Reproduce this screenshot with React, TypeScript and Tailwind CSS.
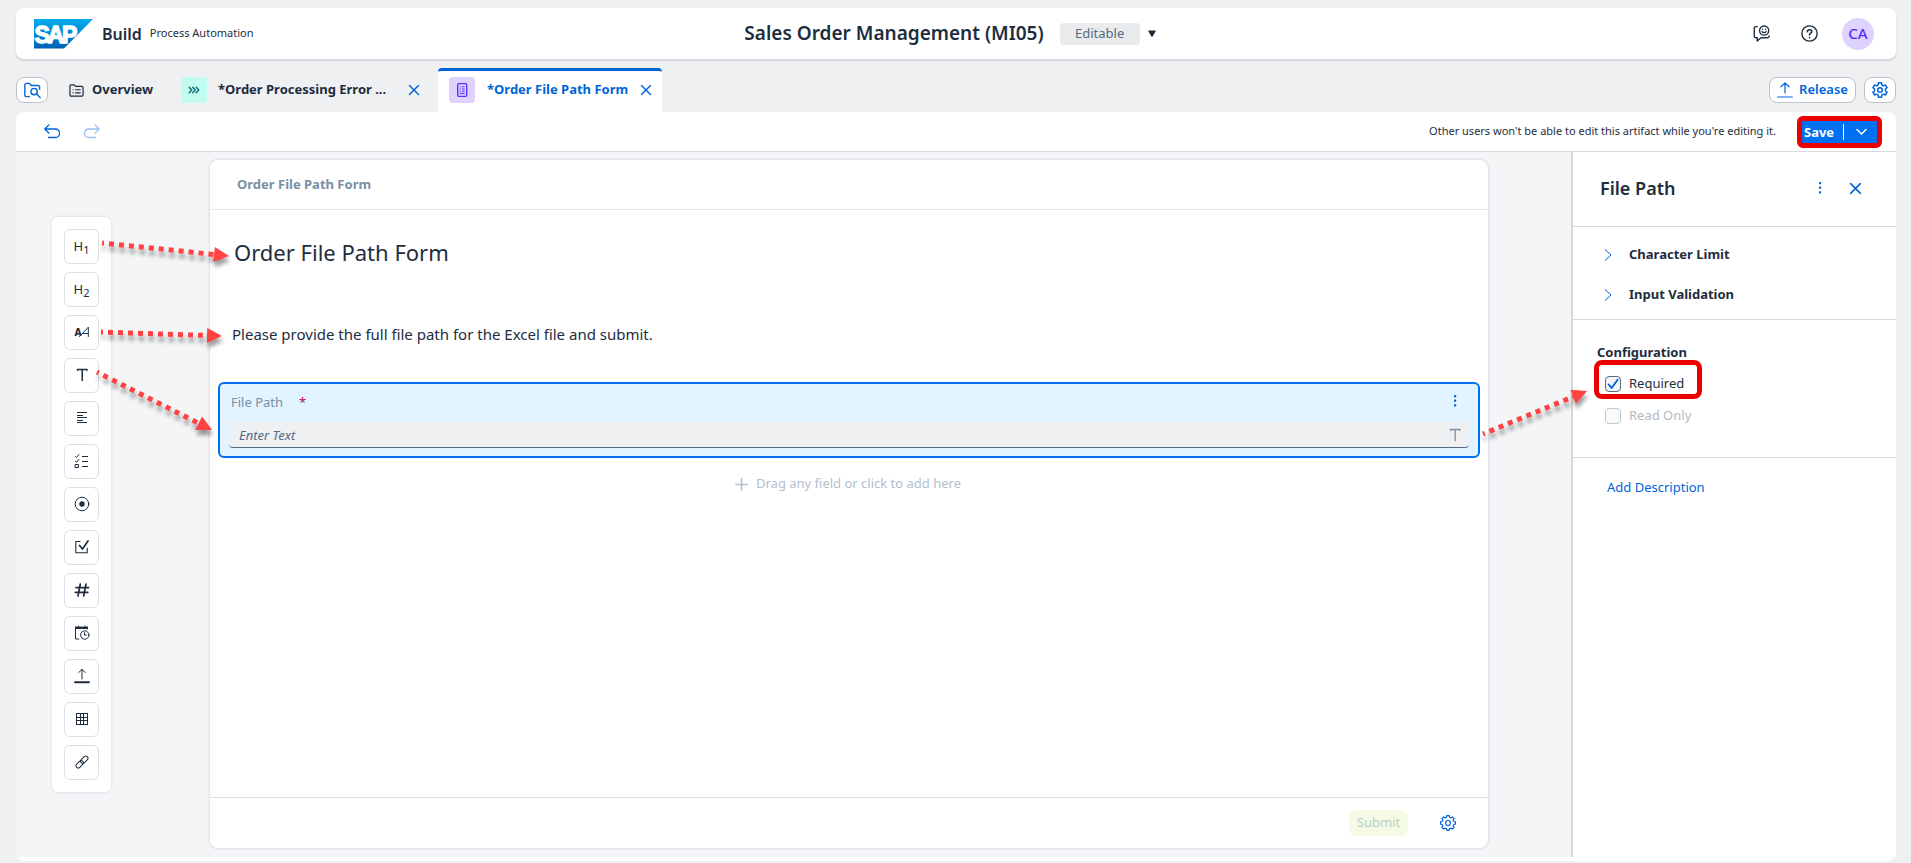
import React from "react";

type IconProps = { children: React.ReactNode; size?: number; className?: string };

function Icon({ children, size = 16, className = "" }: IconProps) {
  return (
    <svg
      width={size}
      height={size}
      viewBox="0 0 16 16"
      fill="none"
      stroke="currentColor"
      strokeWidth={1.3}
      strokeLinecap="round"
      strokeLinejoin="round"
      aria-hidden="true"
      className={"shrink-0 " + className}
    >
      {children}
    </svg>
  );
}

function CloseIcon({ size = 12 }: { size?: number }) {
  return (
    <Icon size={size}>
      <path d="M2 2 14 14M14 2 2 14" strokeWidth={1.9} />
    </Icon>
  );
}

function DotsIcon() {
  return (
    <Icon>
      <g fill="currentColor" stroke="none">
        <rect x="7" y="2" width="2.2" height="2.2" rx=".6" />
        <rect x="7" y="6.6" width="2.2" height="2.2" rx=".6" />
        <rect x="7" y="11.2" width="2.2" height="2.2" rx=".6" />
      </g>
    </Icon>
  );
}

function SapLogo() {
  return (
    <svg width="60" height="30" viewBox="0 0 60 30" role="img" aria-label="SAP">
      <defs>
        <linearGradient id="sap-blue" x1="0" y1="0" x2="0" y2="1">
          <stop offset="0" stopColor="#00aeef" />
          <stop offset="0.5" stopColor="#0086d2" />
          <stop offset="1" stopColor="#0060b4" />
        </linearGradient>
      </defs>
      <path d="M0 0h59L30 29.5H0z" fill="url(#sap-blue)" />
      <text
        y="23.500"
        fontFamily="Liberation Sans, sans-serif"
        fontWeight="700"
        fontSize="23"
        fill="#fff"
        stroke="#fff"
        strokeWidth="1.400"
      >
        <tspan x="0.500">S</tspan>
        <tspan x="13.500">A</tspan>
        <tspan x="28">P</tspan>
      </text>
    </svg>
  );
}

function Arrow({ x1, y1, x2, y2 }: { x1: number; y1: number; x2: number; y2: number }) {
  const length = Math.hypot(x2 - x1, y2 - y1);
  const angle = (Math.atan2(y2 - y1, x2 - x1) * 180) / Math.PI;
  return (
    <g transform={`translate(${x1} ${y1}) rotate(${angle})`}>
      <path d={`M0 0H${length - 14}`} stroke="#ff4343" strokeWidth="5" strokeDasharray="5 5" strokeDashoffset="3" />
      <path d={`M${length - 15} -7.5 ${length} 0 ${length - 15} 7.5z`} fill="#ff4343" />
    </g>
  );
}

/** Outline of a cog centred on 8,8 with the given number of teeth. */
function cogPath(teeth: number, outer: number, inner: number) {
  const step = (Math.PI * 2) / teeth;
  const points: string[] = [];
  for (let i = 0; i < teeth; i++) {
    const a = i * step - Math.PI / 2;
    const corners: [number, number][] = [
      [-0.32, inner],
      [-0.2, outer],
      [0.2, outer],
      [0.32, inner],
    ];
    for (const [offset, radius] of corners) {
      const t = a + offset * step;
      points.push(`${(8 + radius * Math.cos(t)).toFixed(2)} ${(8 + radius * Math.sin(t)).toFixed(2)}`);
    }
  }
  return `M${points.join("L")}z`;
}

const tools: { name: string; icon: React.ReactNode }[] = [
  {
    name: "Heading 1",
    icon: (
      <span className="text-[13px] leading-4">
        H<sub className="text-[11px]">1</sub>
      </span>
    ),
  },
  {
    name: "Heading 2",
    icon: (
      <span className="text-[13px] leading-4">
        H<sub className="text-[11px]">2</sub>
      </span>
    ),
  },
  {
    name: "Paragraph",
    icon: (
      <Icon>
        <text x="0.500" y="12" fontSize="10" fontWeight="800" fill="currentColor" stroke="none">
          A
        </text>
        <path d="M5.500 12.500 14.300 3.200v9.300M9 9.500h5" strokeWidth="1" />
      </Icon>
    ),
  },
  {
    name: "Text",
    icon: (
      <Icon>
        <path d="M3.500 2.500h9.500M8.200 2.500v11M3.500 2.500v.8M13 2.500v.8" strokeWidth="1.500" />
      </Icon>
    ),
  },
  {
    name: "Text Area",
    icon: (
      <Icon>
        <path d="M3 2.500h10M3 5.500h6M3 7.500h10M3 10.500h6M3 12.500h10" strokeWidth="1" strokeLinecap="butt" />
      </Icon>
    ),
  },
  {
    name: "Choice",
    icon: (
      <Icon>
        <path d="M8 3.500h6M8 8.500h6M8 13.500h6" strokeWidth="1" strokeLinecap="butt" />
        <path d="m1.500 3.500 1 1 2.500-3M1.500 8.300l1 1L5 6.500" strokeWidth="1" />
        <rect x="1.500" y="11.500" width="3" height="3" strokeWidth="1" />
      </Icon>
    ),
  },
  {
    name: "Radio",
    icon: (
      <Icon>
        <circle cx="8" cy="8" r="6.800" strokeWidth="1" />
        <circle cx="8" cy="8" r="2.700" fill="currentColor" stroke="none" />
      </Icon>
    ),
  },
  {
    name: "Checkbox",
    icon: (
      <Icon>
        <path d="M6 2.500H1.800v11.200h11.400V9" strokeWidth="1.100" />
        <path d="m5.500 6.500 3 3.500L14 2" strokeWidth="1.700" />
      </Icon>
    ),
  },
  {
    name: "Number",
    icon: (
      <Icon>
        <path d="M6.300 2 4 14M12 2 9.700 14M2 5.700h12.500M1.300 10.300h12.500" strokeWidth="1.700" />
      </Icon>
    ),
  },
  {
    name: "Date",
    icon: (
      <Icon>
        <path d="M1 2.800h12.500" strokeWidth="2.400" strokeLinecap="butt" />
        <path d="M4.500 1v1M11 1v1M4.800 14H1.500V2M13.400 2v2" strokeWidth="1" />
        <circle cx="10.800" cy="10" r="4.200" strokeWidth="1" />
        <path d="M10.500 7.500V10h2" strokeWidth="1" />
      </Icon>
    ),
  },
  {
    name: "Upload",
    icon: (
      <Icon>
        <path d="M8 11V1.500M4.800 4.500 8 1.300l3.200 3.200" strokeWidth="1" />
        <path d="M1 14.200h14" strokeWidth="1.900" />
      </Icon>
    ),
  },
  {
    name: "Table",
    icon: (
      <Icon>
        <path
          d="M2 2.500h12M2 6.500h12M2 9.500h12M2 13.500h12M2.500 2v12M6.500 2v12M9.500 2v12M13.500 2v12"
          strokeWidth="1"
          strokeLinecap="butt"
        />
      </Icon>
    ),
  },
  {
    name: "Link",
    icon: (
      <Icon>
        <g transform="rotate(-45 8 8)" strokeWidth="1">
          <rect x="0.500" y="5.800" width="8.500" height="4.400" rx="2.200" />
          <rect x="7" y="5.800" width="8.500" height="4.400" rx="2.200" />
        </g>
      </Icon>
    ),
  },
];

function Header() {
  return (
    <header className="mr-[15px] ml-4 mt-2 grid h-[51px] shrink-0 grid-cols-[1fr_auto_1fr] items-center rounded-lg bg-white pr-[22px] pl-[18px] shadow-[0_2px_2px_#cfd4d8]">
      <div className="flex items-center">
        <SapLogo />
        <span className="ml-2 text-[16px] font-semibold">Build</span>
        <span className="ml-2 text-[11px]">Process Automation</span>
      </div>
      <div className="mr-2 flex items-center">
        <h1 className="text-[19px] font-semibold">Sales Order Management (MI05)</h1>
        <span className="ml-4 flex h-[22px] w-20 items-center justify-center rounded bg-[#eaebec] text-[13px] text-[#556b82]">
          Editable
        </span>
        <button type="button" aria-label="Change version" className="ml-2">
          <svg width="8" height="7" viewBox="0 0 8 7" aria-hidden="true">
            <path d="M0 .5h8L4.700 6.500H3.300z" fill="#1d2d3e" />
          </svg>
        </button>
      </div>
      <div className="flex items-center justify-end">
        <button type="button" aria-label="Feedback">
          <Icon size={17}>
            <path d="M4 1.500H2.700A1.500 1.500 0 0 0 1.200 3v7.500A1.500 1.500 0 0 0 2.700 12H4v3l3.500-3h6a1.600 1.600 0 0 0 1.700-1.600" />
            <circle cx="10.500" cy="5.200" r="4.300" />
            <path d="M8.600 6.200c.9 1.300 2.900 1.300 3.800 0M9 3.900v.2M12 3.900v.2" />
          </Icon>
        </button>
        <button type="button" aria-label="Help" className="ml-[31px]">
          <Icon size={17}>
            <circle cx="8" cy="8" r="7.200" />
            <path d="M6 6.300c0-2.500 4.100-2.500 4.100-.2C10.100 7.600 8 7.600 8 9.300M8 11.800v.2" strokeWidth="1.500" />
          </Icon>
        </button>
        <button
          type="button"
          className="ml-6 flex size-8 items-center justify-center rounded-full bg-[#ded3ff] text-[15px] font-medium text-[#552cff]"
        >
          CA
        </button>
      </div>
    </header>
  );
}

const boxButton = "flex h-[26px] items-center justify-center rounded-lg border border-[#bcc3ca] bg-white text-[#0064d9]";

function TabBar() {
  return (
    <nav className="mr-[15px] ml-4 mt-[9px] flex h-11 shrink-0 items-center">
      <button type="button" aria-label="Browse project" className={boxButton + " w-8"}>
        <Icon size={17}>
          <path d="M5 13.800H2.300A1.500 1.500 0 0 1 .8 12.300V2.800A1.500 1.500 0 0 1 2.300 1.300H5l1.800 2h6.400a1.500 1.500 0 0 1 1.500 1.500v2" />
          <circle cx="9.500" cy="9" r="3" />
          <path d="m11.800 11.300 3.400 3.200" />
        </Icon>
      </button>
      <a href="#overview" className="ml-[21px] flex items-center text-[13px] font-bold">
        <Icon size={15}>
          <path d="M1 3.300A1.300 1.300 0 0 1 2.300 2h3.200L7 3.600h6.500A1.500 1.500 0 0 1 15 5.100v7.400a1.500 1.500 0 0 1-1.500 1.500h-11A1.500 1.500 0 0 1 1 12.500z" />
          <path d="M4.300 7.200h.2M7 7.200h5M4.300 10.500h.2M7 10.500h5" />
        </Icon>
        <span className="ml-2 min-w-[62px]">Overview</span>
      </a>
      <div className="ml-[27px] flex items-center">
        <span className="flex size-[26px] items-center justify-center rounded bg-[#c2fcee] text-[#046c7a]">
          <Icon size={14}>
            <path d="m2.500 4.800 3 3.200-3 3.200M6.500 4.800l3 3.200-3 3.200M10.500 4.800l3 3.200-3 3.200" strokeWidth="1.600" />
          </Icon>
        </span>
        <a href="#order-processing" className="ml-[11px] min-w-[173px] text-[13px] font-bold">
          *Order Processing Error ...
        </a>
        <button type="button" aria-label="Close Order Processing Error" className="ml-[17px] text-[#0064d9]">
          <CloseIcon />
        </button>
      </div>
      <div className="ml-[18px] flex h-11 items-center rounded-t-sm border-t-3 border-[#0064d9] bg-white pr-2.5 pb-[3px] pl-[11px] text-[#0064d9]">
        <span className="flex size-[26px] items-center justify-center rounded bg-[#ded3ff] text-[#552cff]">
          <Icon>
            <rect x="3.700" y="1.700" width="9" height="12.600" rx="1" />
            <path d="M6 4.800h.4M8.300 4.800h2M6 7h.4M8.300 7h2M6 9.200h.4M8.300 9.200h2M6 11.400h4.300" strokeWidth="1" />
          </Icon>
        </span>
        <a href="#order-file-path" aria-current="page" className="ml-3 min-w-[143px] text-[13px] font-bold">
          *Order File Path Form
        </a>
        <button type="button" aria-label="Close Order File Path Form" className="ml-2.5">
          <CloseIcon />
        </button>
      </div>
      <div className="ml-auto flex gap-2">
        <button type="button" className={boxButton + " w-[87px] gap-1.5 text-[13px] font-semibold"}>
          <Icon>
            <path d="M8 11V1.200M4 4.800 8 .9l4 3.900M.6 15h14.800" strokeWidth="1.200" />
          </Icon>
          Release
        </button>
        <button type="button" aria-label="Settings" className={boxButton + " w-8"}>
          <Icon>
            <path d={cogPath(6, 7.400, 5.500)} strokeWidth="1.500" />
            <circle cx="8" cy="8" r="2.300" strokeWidth="1.500" />
          </Icon>
        </button>
      </div>
    </nav>
  );
}

function Toolbar() {
  return (
    <div className="flex h-10 shrink-0 items-center rounded-t-lg border-b border-[#d9d9d9] bg-white pr-3.5 pl-7">
      <button type="button" aria-label="Undo" className="text-[#0064d9]">
        <Icon>
          <path d="M4.800 1 .8 5l4 4M1 5h10.500a4 4 0 0 1 4 4.200c0 2.400-1.700 4.300-4 4.300H4.500" />
        </Icon>
      </button>
      <button type="button" aria-label="Redo" disabled className="ml-6 text-[#99c1f0]">
        <Icon>
          <path d="m11.200 1 4 4-4 4M15 5H4.500a4 4 0 0 0-4 4.200c0 2.400 1.700 4.300 4 4.300h7" />
        </Icon>
      </button>
      <p className="ml-auto text-[11px]">Other users won't be able to edit this artifact while you're editing it.</p>
      <div className="ml-[21px] flex h-8 w-[85px] items-center rounded-md border-5 border-[#eb0000] bg-[#0070f2] text-white">
        <button type="button" className="pl-0.5 text-[13px] leading-4 font-bold">
          Save
        </button>
        <button type="button" aria-label="More save options" className="ml-auto flex h-4 items-center border-l border-white pr-2.5 pl-3">
          <svg width="11" height="8" viewBox="0 0 11 8" fill="none" stroke="currentColor" strokeWidth="1.500" aria-hidden="true">
            <path d="m1 1.500 4.500 4.500L10 1.500" strokeLinecap="round" />
          </svg>
        </button>
      </div>
    </div>
  );
}

function Palette() {
  return (
    <div className="flex w-[59px] shrink-0 flex-col items-center gap-2 rounded-md bg-white py-3 shadow-[0_0_3px_#d0d5dc]">
      {tools.map((tool) => (
        <button
          key={tool.name}
          type="button"
          aria-label={tool.name}
          className="flex size-[35px] items-center justify-center rounded-md border border-[#dcdfe6]"
        >
          {tool.icon}
        </button>
      ))}
    </div>
  );
}

function FormCard() {
  return (
    <section className="flex min-w-0 flex-1 flex-col rounded-lg bg-white shadow-[0_0_3px_#bcc6d2]">
      <div className="flex h-[50px] items-center border-b border-[#e8e9eb] px-[27px] text-[13px] font-bold text-[#788fa6]">
        Order File Path Form
      </div>
      <div className="flex flex-1 flex-col px-2">
        <h2 className="mt-[26px] ml-4 text-[22px] leading-8">Order File Path Form</h2>
        <p className="mt-[54px] ml-3.5 text-[15px] leading-6">
          Please provide the full file path for the Excel file and submit.
        </p>
        <div className="mt-9 flex h-[76px] flex-col rounded-md border-2 border-[#0070f2] bg-[#e1f4ff] px-[9px] pb-2">
          <div className="flex flex-1 items-center pl-0.5 text-[13px]">
            <label htmlFor="file-path" className="text-[#788fa6]">
              File Path
            </label>
            <span className="ml-4 text-[#ba066c]">*</span>
            <button type="button" aria-label="Field actions" className="mr-1.5 ml-auto pb-1 text-[#0064d9]">
              <DotsIcon />
            </button>
          </div>
          <div className="flex h-[26px] items-center rounded-sm border-b border-[#556b82] bg-[#eff0f2] pr-1.5 pl-2.5">
            <input
              id="file-path"
              type="text"
              placeholder="Enter Text"
              className="h-6 min-w-0 flex-1 bg-transparent text-[13px] outline-none placeholder:text-[#556b82] placeholder:italic"
            />
            <Icon className="text-[#788fa6]">
              <path d="M3.500 2.500h9.500M8.200 2.500v11M3.500 2.500v.8M13 2.500v.8" strokeWidth="1.300" />
            </Icon>
          </div>
        </div>
        <button type="button" className="mt-4 flex h-5 items-center justify-center gap-2 text-[13px] text-[#b3c0ce]">
          <Icon size={13}>
            <path d="M8 1v14M1 8h14" strokeWidth="2" />
          </Icon>
          <span className="min-w-[207px] text-left">Drag any field or click to add here</span>
        </button>
      </div>
      <div className="flex h-[51px] items-center justify-end border-t border-[#d9dde2] pr-8">
        <button type="button" disabled className="h-[26px] w-[59px] rounded-lg bg-[#f5fae5] text-[13px] text-[#b5cfbd]">
          Submit
        </button>
        <button type="button" aria-label="Form settings" className="ml-8 text-[#0064d9]">
          <Icon>
            <path d={cogPath(8, 7.500, 6)} strokeWidth="1.200" />
            <circle cx="8" cy="8" r="2.500" strokeWidth="1.200" />
          </Icon>
        </button>
      </div>
    </section>
  );
}

function Disclosure({ label }: { label: string }) {
  return (
    <button type="button" aria-expanded="false" className="flex h-10 items-center text-[13px] font-bold">
      <svg width="8" height="12" viewBox="0 0 8 12" fill="none" stroke="#0064d9" aria-hidden="true">
        <path d="m1 .5 6 5.500-6 5.500" />
      </svg>
      <span className="ml-[17px]">{label}</span>
    </button>
  );
}

function PropertiesPanel() {
  return (
    <aside className="flex w-[325px] shrink-0 flex-col border-l-2 border-[#d5d7da] bg-white">
      <div className="flex h-[75px] items-center border-b border-[#d9d9d9] pr-[34px] pb-0.5 pl-[27px]">
        <h2 className="text-[18px] font-semibold">File Path</h2>
        <div className="ml-auto flex items-center gap-[21px] text-[#0064d9]">
          <button type="button" aria-label="Panel actions">
            <DotsIcon />
          </button>
          <button type="button" aria-label="Close panel">
            <CloseIcon size={13} />
          </button>
        </div>
      </div>
      <div className="flex h-[93px] flex-col border-b border-[#d9d9d9] pt-2 pl-[31px]">
        <Disclosure label="Character Limit" />
        <Disclosure label="Input Validation" />
      </div>
      <div className="flex h-[138px] flex-col border-b border-[#d9d9d9] pt-[22px] pl-6">
        <h3 className="text-[13px] leading-5 font-bold">Configuration</h3>
        <label className="relative mt-1.5 ml-2 flex h-8 items-center gap-2 self-start text-[13px]">
          <span className="absolute -top-2 -left-[11px] h-[39px] w-[108px] rounded-lg border-5 border-[#eb0000]" />
          <span className="grid">
            <input
              type="checkbox"
              defaultChecked
              className="peer col-start-1 row-start-1 size-4 appearance-none rounded border border-[#556b82] bg-[#f2f4f6]"
            />
            <span className="pointer-events-none invisible col-start-1 row-start-1 text-[#0064d9] peer-checked:visible">
              <Icon>
                <path d="m3.700 8.500 2.900 3.500 6-8.300" strokeWidth="1.900" />
              </Icon>
            </span>
          </span>
          Required
        </label>
        <label className="ml-2 flex h-8 items-center gap-2 self-start text-[13px] text-[#b4bac1]">
          <input type="checkbox" disabled className="size-4 appearance-none rounded border border-[#c2c8d0] bg-[#f9fafb]" />
          Read Only
        </label>
      </div>
      <a href="#add-description" className="mt-[19px] ml-[34px] self-start text-[13px] leading-5 text-[#0064d9]">
        Add Description
      </a>
    </aside>
  );
}

export default function App() {
  return (
    <div className="relative flex min-h-screen flex-col bg-[#eff0f2] font-['Noto_Sans',sans-serif] text-[#1d2d3e]">
      <Header />
      <TabBar />
      <main className="mr-[15px] mb-0.5 ml-4 flex flex-1 flex-col rounded-lg bg-white pb-1">
        <Toolbar />
        <div className="flex flex-1">
          <div className="flex min-w-0 flex-1 bg-[#f4f5f7] pt-2 pr-[83px] pb-[9px] pl-9">
            <div className="mr-[99px] flex items-center">
              <Palette />
            </div>
            <FormCard />
          </div>
          <PropertiesPanel />
        </div>
      </main>
      <svg
        width="260"
        height="480"
        viewBox="0 0 260 480"
        aria-hidden="true"
        className="pointer-events-none absolute top-0 left-0 drop-shadow-[1px_5px_2px_rgba(0,0,0,0.4)]"
      >
        <Arrow x1={102} y1={243} x2={229} y2={256} />
        <Arrow x1={101} y1={332} x2={222} y2={336} />
        <Arrow x1={97} y1={372} x2={212} y2={430} />
      </svg>
      <svg
        width="140"
        height="120"
        viewBox="1471 360 140 120"
        aria-hidden="true"
        className="pointer-events-none absolute top-[360px] right-[300px] drop-shadow-[1px_5px_2px_rgba(0,0,0,0.4)]"
      >
        <Arrow x1={1483} y1={434} x2={1587} y2={391} />
      </svg>
    </div>
  );
}
